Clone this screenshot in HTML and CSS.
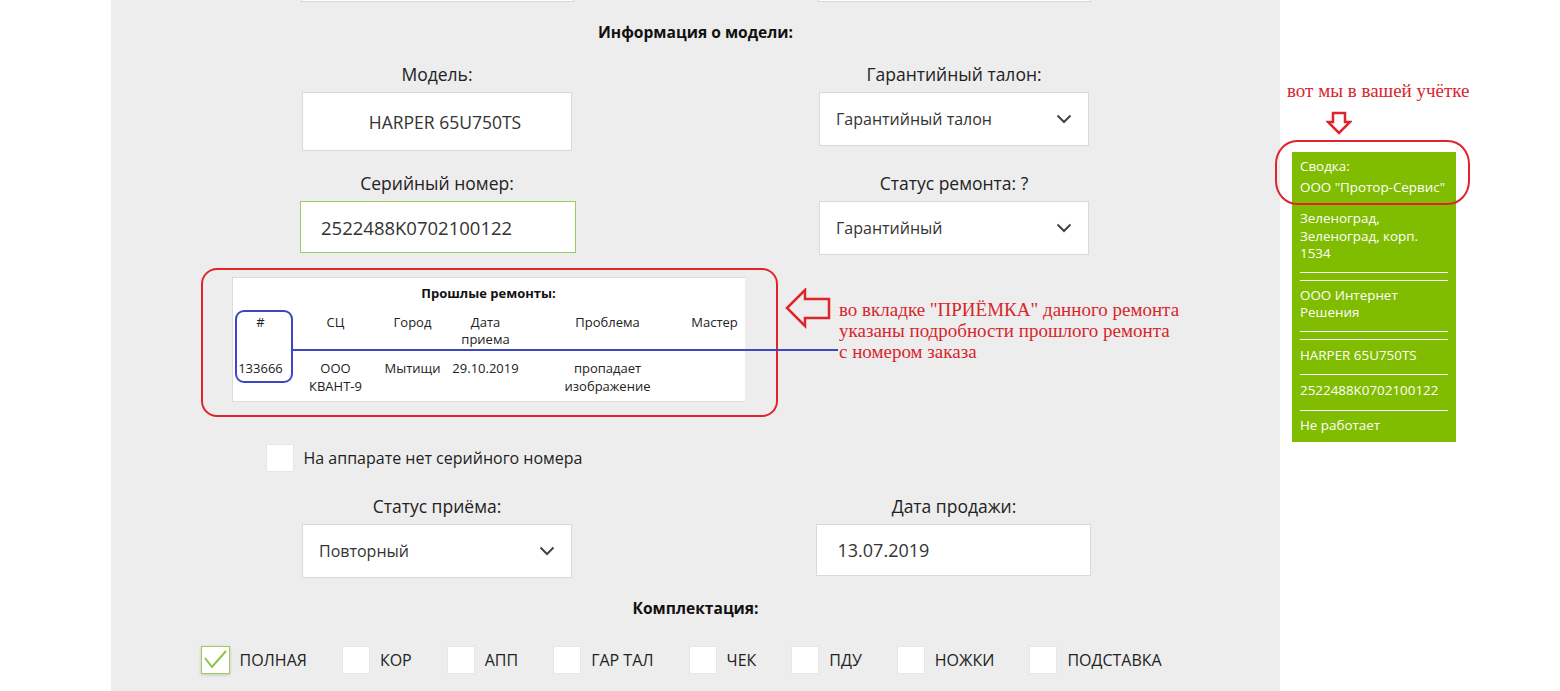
FILE: index.html
```html
<!DOCTYPE html>
<html lang="ru">
<head>
<meta charset="utf-8">
<title>Приёмка</title>
<link rel="stylesheet" href="styles.css">
</head>
<body>
<div class="page">
  <div class="gutter"></div>
  <main class="panel">
    <div class="form">
      <div class="pair top-cut">
        <div class="col"><div class="box"></div></div>
        <div class="col"><div class="box"></div></div>
      </div>

      <div class="section-title first">Информация о модели:</div>

      <div class="pair row1">
        <div class="col">
          <div class="label">Модель:</div>
          <div class="box input model">HARPER 65U750TS</div>
        </div>
        <div class="col">
          <div class="label">Гарантийный талон:</div>
          <div class="box select">
            <span>Гарантийный талон</span>
            <svg class="chev" width="16" height="10" viewBox="0 0 16 10"><polyline points="1.5,1.5 8,8 14.5,1.5" fill="none" stroke="#444" stroke-width="2"/></svg>
          </div>
        </div>
      </div>

      <div class="pair row2">
        <div class="col">
          <div class="label">Серийный номер:</div>
          <div class="box input serial">2522488K0702100122</div>
        </div>
        <div class="col">
          <div class="label">Статус ремонта: ?</div>
          <div class="box select">
            <span>Гарантийный</span>
            <svg class="chev" width="16" height="10" viewBox="0 0 16 10"><polyline points="1.5,1.5 8,8 14.5,1.5" fill="none" stroke="#444" stroke-width="2"/></svg>
          </div>
        </div>
      </div>

      <div class="history">
        <div class="history-title">Прошлые ремонты:</div>
        <table class="history-table">
          <colgroup>
            <col class="c1"><col class="c2"><col class="c3"><col class="c4"><col class="c5"><col class="c6">
          </colgroup>
          <thead>
            <tr><th>#</th><th>СЦ</th><th>Город</th><th>Дата<br>приема</th><th>Проблема</th><th>Мастер</th></tr>
          </thead>
          <tbody>
            <tr><td>133666</td><td>ООО<br>КВАНТ-9</td><td>Мытищи</td><td>29.10.2019</td><td>пропадает<br>изображение</td><td></td></tr>
          </tbody>
        </table>
      </div>

      <label class="check-line noserial">
        <span class="cb"></span>
        <span>На аппарате нет серийного номера</span>
      </label>

      <div class="pair row3">
        <div class="col">
          <div class="label">Статус приёма:</div>
          <div class="box select">
            <span>Повторный</span>
            <svg class="chev" width="16" height="10" viewBox="0 0 16 10"><polyline points="1.5,1.5 8,8 14.5,1.5" fill="none" stroke="#444" stroke-width="2"/></svg>
          </div>
        </div>
        <div class="col">
          <div class="label">Дата продажи:</div>
          <div class="box input date">13.07.2019</div>
        </div>
      </div>

      <div class="section-title kit-title">Комплектация:</div>

      <div class="kit">
        <label class="check-line"><span class="cb checked"><svg width="29" height="28" viewBox="0 0 29 28"><polyline points="4,12 11,21 25,5" fill="none" stroke="#8cc63f" stroke-width="2"/></svg></span><span>ПОЛНАЯ</span></label>
        <label class="check-line"><span class="cb"></span><span>КОР</span></label>
        <label class="check-line"><span class="cb"></span><span>АПП</span></label>
        <label class="check-line"><span class="cb"></span><span>ГАР ТАЛ</span></label>
        <label class="check-line"><span class="cb"></span><span>ЧЕК</span></label>
        <label class="check-line"><span class="cb"></span><span>ПДУ</span></label>
        <label class="check-line"><span class="cb"></span><span>НОЖКИ</span></label>
        <label class="check-line"><span class="cb"></span><span>ПОДСТАВКА</span></label>
      </div>
    </div>

    <div class="ann-rect"></div>
    <div class="ann-blue"></div>
    <div class="ann-line"></div>
    <svg class="ann-arrow" width="48" height="42" viewBox="0 0 48 42"><polygon points="2,20 20,2 20,11 44,11 44,30 20,30 20,38" fill="none" stroke="#e0242c" stroke-width="2.5" stroke-linejoin="miter"/></svg>
    <div class="ann-text">во вкладке "ПРИЁМКА" данного ремонта<br>указаны подробности прошлого ремонта<br>с номером заказа</div>
  </main>

  <aside class="side">
    <div class="note">вот мы в вашей учётке</div>
    <svg class="down-arrow" width="26" height="24" viewBox="0 0 26 24"><polygon points="7,2 19,2 19,11 24,11 13,22 2,11 7,11" fill="none" stroke="#e0242c" stroke-width="2.5"/></svg>
    <div class="summary">
      <div class="s-item s-head">Сводка:<br>ООО "Протор-Сервис"</div>
      <div class="s-item lined">Зеленоград,<br>Зеленоград, корп.<br>1534</div>
      <div class="s-empty"></div>
      <div class="s-item lined">ООО Интернет<br>Решения</div>
      <div class="s-empty"></div>
      <div class="s-item single lined">HARPER 65U750TS</div>
      <div class="s-item single lined">2522488K0702100122</div>
      <div class="s-item single last">Не работает</div>
    </div>
    <div class="ann-oval"></div>
  </aside>
</div>
</body>
</html>
```

FILE: styles.css
```css
* { box-sizing: border-box; }

html, body {
  margin: 0;
  padding: 0;
  background: #ffffff;
}

body {
  font-family: "Open Sans", "Noto Sans", sans-serif;
  color: #222;
  height: 691px;
  overflow: hidden;
}

.page {
  display: flex;
  align-items: stretch;
  height: 691px;
}

.gutter {
  width: 111px;
  flex: none;
}

.panel {
  width: 1169px;
  flex: none;
  background: #ededed;
  position: relative;
  height: 691px;
}

.form {
  width: 1034px;
  margin: 0 auto;
  display: flex;
  flex-direction: column;
}

.pair {
  display: grid;
  grid-template-columns: 517px 517px;
}

.col {
  display: flex;
  flex-direction: column;
  align-items: center;
}

.box {
  background: #fff;
  border: 1px solid #d9d9d9;
  width: 270px;
}

.top-cut {
  height: 2px;
  overflow: visible;
}

.top-cut .box {
  width: 273px;
  height: 50px;
  margin-top: -48px;
}

.section-title {
  text-align: center;
  font-weight: 700;
  font-size: 15.6px;
  line-height: 20px;
  color: #111;
}

.section-title.first {
  margin-top: 20px;
}

.label {
  font-size: 17.5px;
  line-height: 24px;
  color: #222;
}

.input {
  display: flex;
  align-items: center;
  font-size: 17.5px;
  color: #333;
}

.select {
  display: flex;
  align-items: center;
  justify-content: space-between;
  padding: 0 16px 0 16px;
  font-size: 16px;
  color: #333;
  height: 54px;
}

.chev {
  display: block;
}

.row1 {
  margin-top: 20px;
}

.row1 .box,
.row2 .box,
.row3 .box {
  margin-top: 6px;
}

.model {
  height: 59px;
  justify-content: center;
  padding-left: 16px;
}

.row2 {
  margin-top: 20px;
}

.serial {
  width: 276px;
  height: 52px;
  border-color: #9ccb5e;
  padding-left: 20px;
  font-size: 18.5px;
  transform: translateX(1px);
}

.history {
  margin-top: 22px;
  margin-left: 53px;
  width: 513px;
  height: 125px;
  background: #fff;
  border: 1px solid #dcdcdc;
  border-right: none;
  font-size: 13px;
  color: #222;
}

.history-title {
  text-align: center;
  font-weight: 700;
  line-height: 17px;
  padding-top: 7px;
  color: #111;
}

.history-table {
  border-collapse: collapse;
  table-layout: fixed;
  width: 510px;
  margin-top: 12px;
}

.history-table .c1 { width: 56px; }
.history-table .c2 { width: 94px; }
.history-table .c3 { width: 60px; }
.history-table .c4 { width: 86px; }
.history-table .c5 { width: 158px; }
.history-table .c6 { width: 56px; }

.history-table th,
.history-table td {
  font-weight: 400;
  text-align: center;
  vertical-align: top;
  padding: 0;
  line-height: 17px;
  white-space: nowrap;
}

.history-table td {
  padding-top: 11px;
  line-height: 18px;
}

.check-line {
  display: flex;
  align-items: center;
  gap: 10px;
  font-size: 16px;
  color: #222;
}

.cb {
  width: 28px;
  height: 28px;
  background: #fff;
  border: 1px solid #e6e6e6;
  flex: none;
  display: block;
}

.cb svg {
  display: block;
  margin: -1px;
}

.cb.checked {
  width: 29px;
  border: 1px solid #9ccb5e;
  box-shadow: 0 1px 3px rgba(0, 0, 0, 0.18);
}

.noserial {
  margin-top: 42px;
  margin-left: 87px;
}

.row3 {
  margin-top: 22px;
}

.date {
  width: 275px;
  height: 52px;
  padding-left: 21px;
  font-size: 18px;
  transform: translateX(-1px);
}

.kit-title {
  margin-top: 20px;
}

.kit {
  display: flex;
  gap: 35px;
  margin-top: 28px;
  margin-left: 22px;
}

/* annotations */
.ann-rect {
  position: absolute;
  left: 90px;
  top: 268px;
  width: 577px;
  height: 149px;
  border: 2px solid #e0242c;
  border-radius: 16px;
}

.ann-blue {
  position: absolute;
  left: 124px;
  top: 310px;
  width: 58px;
  height: 73px;
  border: 2px solid #3d47c4;
  border-radius: 9px;
}

.ann-line {
  position: absolute;
  left: 181px;
  top: 349px;
  width: 546px;
  height: 2px;
  background: #3d47c4;
}

.ann-arrow {
  position: absolute;
  left: 674px;
  top: 288px;
}

.ann-text {
  position: absolute;
  left: 728px;
  top: 299px;
  font-family: "Liberation Serif", "Times New Roman", serif;
  font-size: 19px;
  line-height: 21px;
  color: #d7262e;
  white-space: nowrap;
}

.side {
  position: relative;
  padding-left: 12px;
  width: 200px;
}

.note {
  margin-top: 81px;
  margin-left: -5px;
  font-family: "Liberation Serif", "Times New Roman", serif;
  font-size: 19px;
  line-height: 20px;
  color: #d7262e;
  white-space: nowrap;
}

.down-arrow {
  display: block;
  margin-top: 10px;
  margin-left: 34px;
}

.summary {
  margin-top: 17px;
  width: 164px;
  background: #80bc00;
  color: #fff;
  font-size: 13.4px;
  padding: 0 8px;
}

.s-item {
  line-height: 17.5px;
  padding: 6px 0 9px;
}

.s-head {
  line-height: 21px;
  padding: 4px 0 6px;
}

.s-item.single {
  padding: 7px 0 10px;
}

.lined {
  border-bottom: 1px solid #ffffff;
}

.s-empty {
  height: 8px;
  border-bottom: 1px solid #ffffff;
}

.s-item.single.last {
  padding: 6px 0 8px;
}

.ann-oval {
  position: absolute;
  left: -5px;
  top: 140px;
  width: 195px;
  height: 65px;
  border: 2px solid #e0242c;
  border-radius: 22px / 24px;
}
```
